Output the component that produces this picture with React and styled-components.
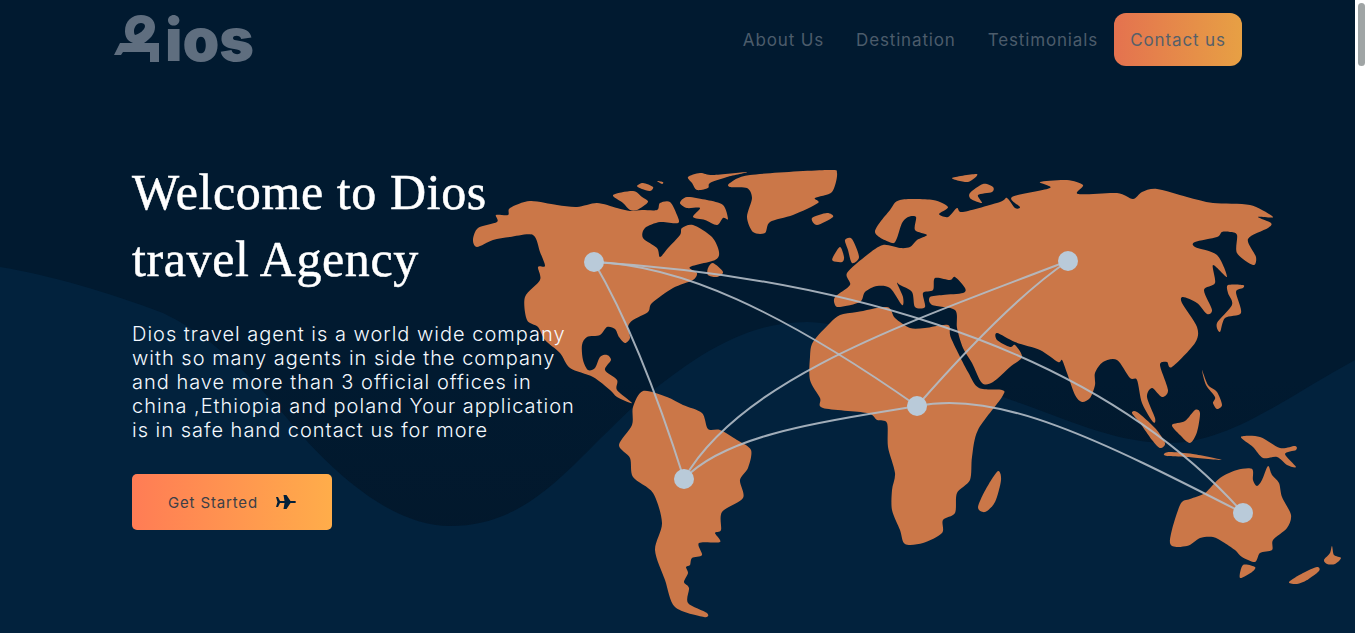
import React from "react";
import styled, { createGlobalStyle } from "styled-components";

const LAND = [
  // north america
  [[473,240],[478,228],[497,222],[496,215],[508,215],[510,208],[530,201],[557,205],[577,207],[597,203],[617,208],[630,211],[642,210],[657,210],[660,203],[670,202],[677,215],[678,223],[660,222],[645,228],[643,238],[657,248],[660,257],[668,248],[680,235],[682,228],[693,225],[712,237],[719,252],[715,260],[690,267],[697,273],[693,280],[673,288],[652,303],[648,312],[633,320],[628,327],[630,338],[625,343],[619,337],[615,329],[607,327],[600,335],[587,337],[582,345],[583,360],[588,370],[595,368],[600,357],[607,355],[611,360],[605,370],[617,380],[617,390],[632,403],[617,397],[610,390],[593,377],[570,368],[560,353],[545,340],[538,327],[527,320],[525,297],[540,280],[538,267],[545,266],[540,252],[533,235],[510,237],[493,240],[477,247]],
  // arctic islands
  [[613,195],[633,191],[642,197],[648,202],[637,210],[630,210],[623,203]],
  [[637,186],[643,183],[653,187],[650,191],[642,189]],
  [[657,181],[663,182],[662,184]],
  [[680,203],[687,197],[707,200],[723,205],[728,219],[723,218],[717,225],[705,220],[693,217],[700,208],[687,208]],
  [[708,268],[713,263],[723,272],[717,277],[708,275]],
  [[688,177],[700,173],[713,175],[747,172],[727,177],[710,183],[708,188],[697,190],[692,183]],
  // greenland, iceland, uk
  [[730,183],[750,175],[827,170],[837,173],[832,192],[815,198],[818,203],[793,215],[770,222],[765,233],[753,232],[747,217],[752,198],[747,188],[730,187]],
  [[812,218],[827,213],[833,217],[817,225]],
  [[845,240],[852,239],[859,257],[852,263],[848,250]],
  [[833,257],[840,247],[844,257],[842,262],[833,261]],
  // eurasia
  [[835,297],[850,285],[847,273],[867,255],[883,245],[900,248],[910,247],[917,240],[927,235],[915,230],[916,217],[908,217],[902,223],[897,238],[892,243],[875,232],[890,210],[900,200],[933,200],[948,207],[939,214],[948,217],[957,208],[963,212],[1000,202],[1007,198],[1015,208],[1020,207],[1012,197],[1050,188],[1040,182],[1067,180],[1083,185],[1078,194],[1117,193],[1133,199],[1142,192],[1157,189],[1187,197],[1213,203],[1250,205],[1273,217],[1258,217],[1271,223],[1268,228],[1248,239],[1256,257],[1253,265],[1237,253],[1237,235],[1230,232],[1222,232],[1217,237],[1195,242],[1195,247],[1217,255],[1227,277],[1213,265],[1215,283],[1204,290],[1212,310],[1207,314],[1197,303],[1183,297],[1182,303],[1197,327],[1195,343],[1172,367],[1167,362],[1160,365],[1168,390],[1162,397],[1152,388],[1147,397],[1155,418],[1153,422],[1142,403],[1137,380],[1130,378],[1117,360],[1103,362],[1095,373],[1095,385],[1090,398],[1082,402],[1075,395],[1067,373],[1062,360],[1058,362],[1040,350],[1015,342],[997,333],[997,340],[1010,347],[1015,345],[1022,357],[1010,367],[993,382],[982,383],[972,363],[963,348],[957,328],[955,310],[932,305],[930,297],[943,295],[963,293],[965,288],[955,277],[950,280],[935,278],[933,290],[923,293],[925,307],[915,307],[912,292],[900,285],[897,283],[903,297],[902,305],[890,288],[877,286],[865,292],[860,302],[840,307],[835,305]],
  // africa
  [[810,357],[813,342],[830,323],[840,315],[857,312],[887,307],[895,318],[910,328],[925,328],[948,325],[951,338],[968,372],[979,388],[1002,390],[1002,397],[978,430],[972,457],[970,480],[957,493],[955,513],[943,520],[942,533],[923,543],[905,544],[900,530],[892,510],[892,490],[895,473],[888,447],[887,423],[877,420],[867,413],[823,408],[820,398],[810,380]],
  [[998,471],[1001,480],[995,502],[985,512],[978,507],[987,487]],
  // south america
  [[633,407],[643,391],[667,397],[683,405],[702,413],[708,429],[720,430],[737,440],[751,450],[748,468],[740,480],[743,498],[722,512],[721,530],[715,533],[720,542],[699,543],[702,555],[692,558],[690,565],[686,567],[688,573],[684,582],[689,588],[688,603],[707,613],[704,617],[675,607],[665,580],[655,550],[662,523],[653,493],[633,477],[630,458],[619,445],[632,425]],
  // south east asia and oceania
  [[1132,413],[1137,412],[1155,428],[1165,443],[1160,448],[1152,440],[1140,423]],
  [[1164,454],[1170,452],[1193,454],[1222,460],[1187,457],[1167,456]],
  [[1172,425],[1185,421],[1195,410],[1200,413],[1197,432],[1190,443],[1180,435]],
  [[1202,370],[1208,385],[1217,392],[1222,405],[1217,409],[1213,403],[1215,397],[1206,385]],
  [[1228,285],[1243,285],[1243,288],[1236,292],[1241,313],[1225,318],[1220,332],[1217,323],[1232,305],[1228,293]],
  [[1241,437],[1260,437],[1280,448],[1295,446],[1296,450],[1285,454],[1296,467],[1287,465],[1277,457],[1263,458],[1253,447]],
  [[1170,543],[1180,505],[1190,499],[1205,493],[1220,478],[1237,470],[1252,469],[1253,480],[1257,486],[1262,480],[1268,466],[1272,475],[1279,483],[1282,497],[1291,515],[1287,528],[1273,540],[1272,550],[1260,553],[1255,562],[1242,557],[1235,550],[1223,542],[1213,537],[1200,538],[1187,546]],
  [[1243,565],[1255,567],[1252,572],[1240,578]],
  [[1289,582],[1303,573],[1317,567],[1319,571],[1307,580],[1297,584]],
  [[1332,546],[1334,555],[1341,558],[1335,564],[1327,564],[1324,560],[1330,553]],
  [[952,178],[977,174],[968,182]],
  [[970,193],[983,184],[993,187],[992,192],[978,195],[982,203],[971,199]],
];

const ROUTES = [
  "M594 262C800 275 1080 330 1243 513",
  "M594 262C680 265 780 310 917 406",
  "M594 262Q640 340 684 479",
  "M1068 261C900 325 740 380 684 479",
  "M1068 261Q1010 300 917 406",
  "M684 479C730 430 850 418 917 406",
  "M917 406C1000 390 1100 440 1243 513",
];

const CITIES = [
  [594, 262],
  [1068, 261],
  [917, 406],
  [684, 479],
  [1243, 513],
];

const WAVE =
  "M0 267C50 275 110 293 163 313C210 335 250 375 286 417C330 470 390 526 450 526C530 526 570 465 633 407C700 350 750 322 807 322C870 322 950 380 1020 403C1080 425 1120 443 1170 443C1230 443 1290 395 1355 360V633H0Z";

// rounds a traced outline a little so the coast does not look polygonal
const smooth = (pts) => {
  const n = pts.length;
  let d = `M${pts[0][0]} ${pts[0][1]}`;
  for (let i = 0; i < n; i++) {
    const p0 = pts[(i - 1 + n) % n];
    const p1 = pts[i];
    const p2 = pts[(i + 1) % n];
    const p3 = pts[(i + 2) % n];
    const c1x = p1[0] + (p2[0] - p0[0]) / 7;
    const c1y = p1[1] + (p2[1] - p0[1]) / 7;
    const c2x = p2[0] - (p3[0] - p1[0]) / 7;
    const c2y = p2[1] - (p3[1] - p1[1]) / 7;
    d += `C${c1x.toFixed(1)} ${c1y.toFixed(1)} ${c2x.toFixed(1)} ${c2y.toFixed(1)} ${p2[0]} ${p2[1]}`;
  }
  return d + "Z";
};

const GlobalStyle = createGlobalStyle`
  html, body {
    height: 100%;
    overflow: hidden;
  }
  body {
    margin: 0;
    background: #fff;
    font-family: Inter, "Liberation Sans", sans-serif;
  }
`;

const Page = styled.div`
  margin-right: 13px;
`;

const ScrollTrack = styled.div`
  position: fixed;
  top: 0;
  right: 0;
  width: 13px;
  height: 100%;
  background: #fff;
`;

const ScrollThumb = styled.div`
  width: 7px;
  height: 63px;
  margin: 3px 0 0 3px;
  border-radius: 4px;
  background: #a0a5a5;
`;

const Hero = styled.section`
  position: relative;
  height: 633px;
  overflow: hidden;
  background: linear-gradient(180deg, #011a30 0%, #011a30 60%, #03172a 100%);
`;

const Art = styled.svg`
  position: absolute;
  left: 0;
  top: 0;
  width: 1355px;
  height: 633px;
`;

const Nav = styled.nav`
  position: relative;
  display: flex;
  align-items: flex-start;
  justify-content: space-between;
  padding: 13px 113px 0 114px;
`;

const Logo = styled.div`
  display: flex;
  align-items: flex-start;
  gap: 5px;
  margin-top: 2px;
`;

const LogoMark = styled.svg`
  width: 46px;
  height: 47px;
  fill: #5f6e7f;
`;

const LogoText = styled.span`
  font-size: 59px;
  font-weight: 900;
  line-height: 49px;
  color: #5f6e7f;
`;

const Links = styled.div`
  display: flex;
  align-items: center;
  height: 53px;
`;

const NavLink = styled.a`
  margin-right: 32px;
  font-size: 17px;
  letter-spacing: 0.85px;
  color: #4c5c6b;
  &:nth-child(3) {
    margin-right: 16px;
  }
`;

const ContactButton = styled.a`
  display: flex;
  align-items: center;
  justify-content: center;
  width: 128px;
  height: 53px;
  border-radius: 12px;
  font-size: 17px;
  letter-spacing: 0.85px;
  color: #55606a;
  background: linear-gradient(90deg, #e4724f, #e7a044);
`;

const Content = styled.div`
  position: relative;
  padding: 93px 0 0 132px;
`;

const Title = styled.h1`
  margin: 0;
  width: 400px;
  font-family: "Liberation Serif", serif;
  font-size: 50px;
  font-weight: 400;
  line-height: 67px;
  letter-spacing: 0.6px;
  color: #fff;
  -webkit-text-stroke: 0.5px #fff;
`;

const Intro = styled.p`
  margin: 29px 0 0;
  width: 445px;
  font-size: 20px;
  font-weight: 300;
  line-height: 24px;
  letter-spacing: 1px;
  color: #f4f9ff;
`;

const StartButton = styled.a`
  display: flex;
  align-items: center;
  justify-content: center;
  gap: 18px;
  width: 200px;
  height: 56px;
  margin-top: 32px;
  border-radius: 5px;
  font-size: 15px;
  letter-spacing: 0.85px;
  color: #3c3f47;
  background: linear-gradient(90deg, #ff7c55, #ffad4a);
`;

const PlaneIcon = styled.svg`
  width: 20px;
  height: 14px;
  fill: #02203a;
`;

export default function App() {
  return (
    <Page>
      <GlobalStyle />
      <Hero>
        <Art viewBox="0 0 1355 633">
          <path d={WAVE} fill="#02223d" />
          {LAND.map((pts, i) => (
            <path key={i} d={smooth(pts)} fill="#cb7748" />
          ))}
          {ROUTES.map((d) => (
            <path key={d} d={d} fill="none" stroke="#b3bcc6" strokeWidth="2" opacity="0.9" />
          ))}
          {CITIES.map(([x, y]) => (
            <circle key={x} cx={x} cy={y} r="10" fill="#b9cad9" />
          ))}
        </Art>
        <Nav>
          <Logo>
            <LogoMark viewBox="0 0 46 47">
              <path
                fillRule="evenodd"
                d="M0 40L6 28H19C13 26 11 21 11 16C11 6 18 0 27 0C36 0 41 5 41 12C41 19 36 24 30 28H45V47H36V37H9L7 40ZM21 20C25 19 31 15 31 11C31 9 29 8 27 8C23 8 21 11 20 15C20 17 20 19 21 20Z"
              />
            </LogoMark>
            <LogoText>ios</LogoText>
          </Logo>
          <Links>
            <NavLink>About Us</NavLink>
            <NavLink>Destination</NavLink>
            <NavLink>Testimonials</NavLink>
            <ContactButton>Contact us</ContactButton>
          </Links>
        </Nav>
        <Content>
          <Title>Welcome to Dios travel Agency</Title>
          <Intro>
            Dios travel agent is a world wide company with so many agents in side the company and
            have more than 3 official offices in china ,Ethiopia and poland Your application is in
            safe hand contact us for more
          </Intro>
          <StartButton>
            Get Started
            <PlaneIcon viewBox="0 0 20 14">
              <path d="M0 2H2L4 6H8.5L7.5 0H10.5L14.5 6H18C19.5 6 20 6.5 20 7C20 7.5 19.5 8 18 8H14.5L10.5 14H7.5L8.5 8H4L2 12H0L1.5 7Z" />
            </PlaneIcon>
          </StartButton>
        </Content>
      </Hero>
      <ScrollTrack>
        <ScrollThumb />
      </ScrollTrack>
    </Page>
  );
}
